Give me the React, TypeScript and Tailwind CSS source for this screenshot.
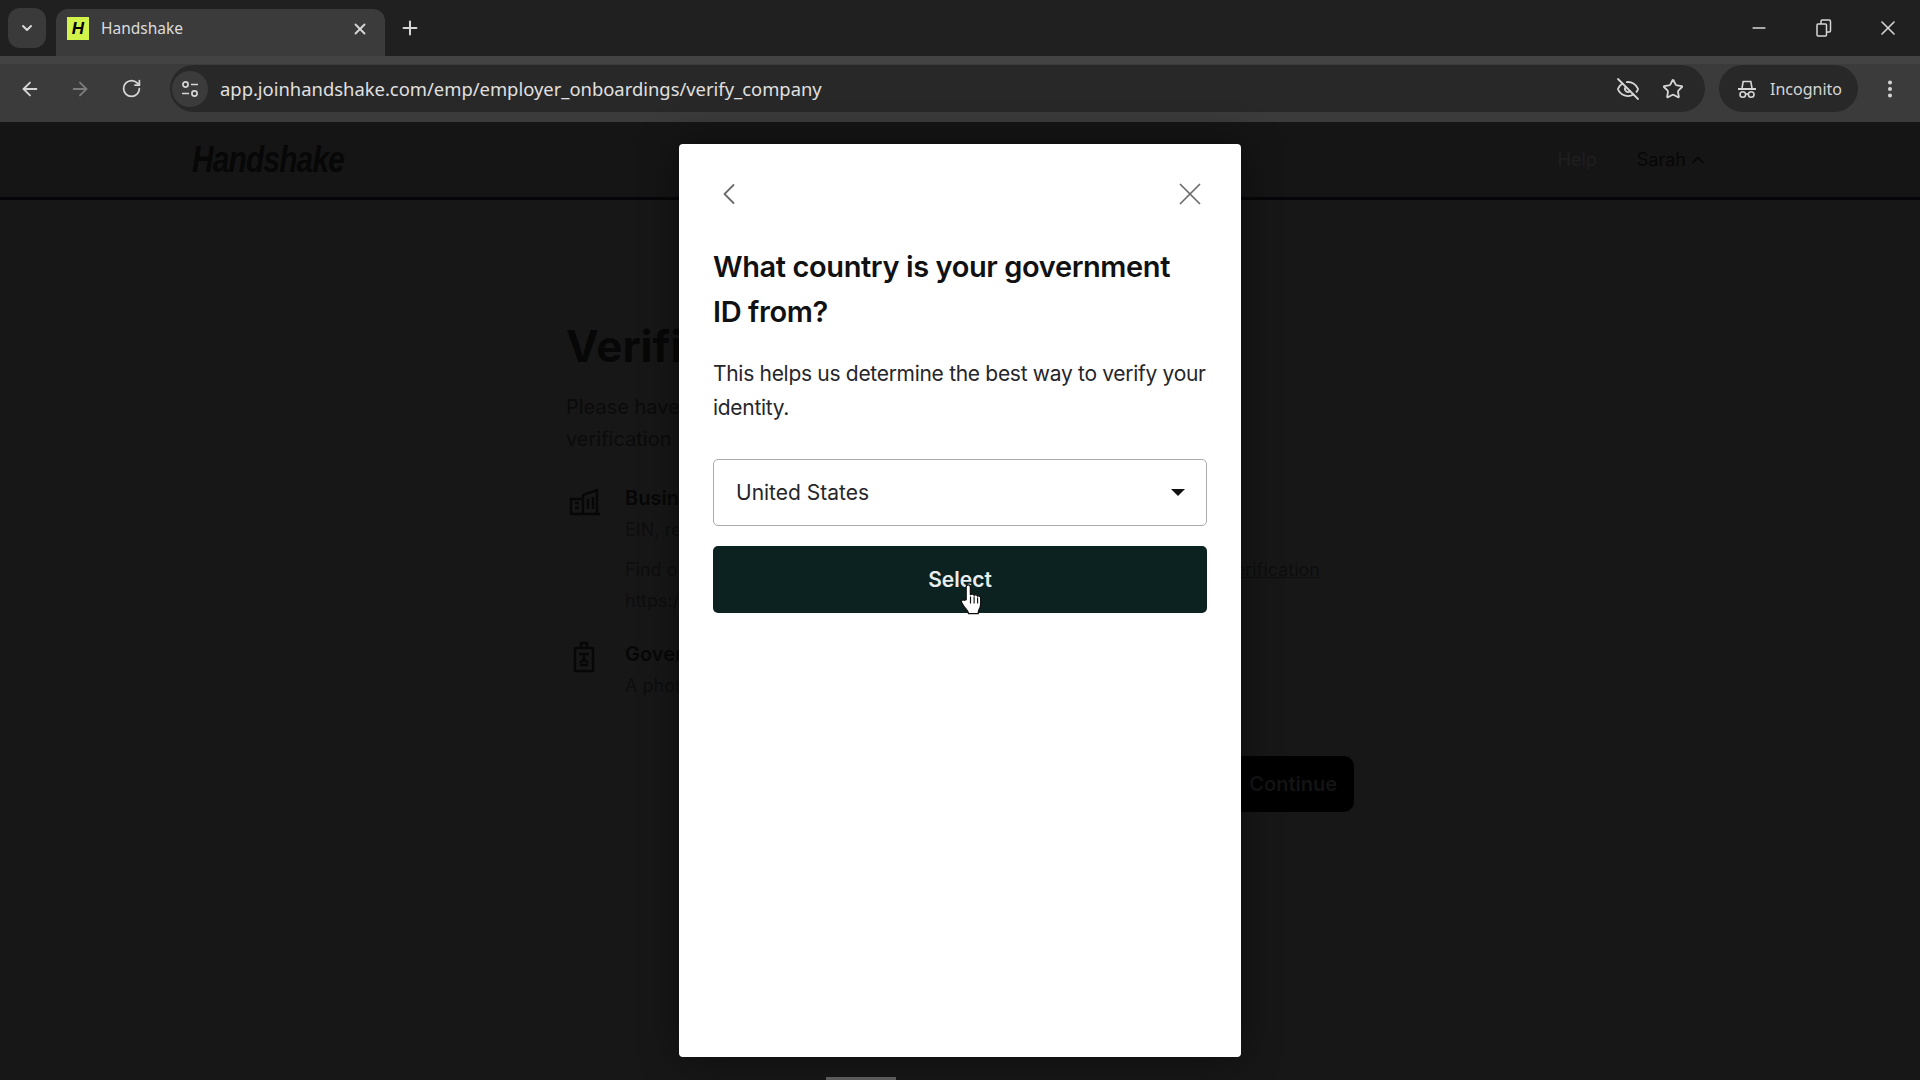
import { ArrowLeft, ArrowRight, ChevronDown, ChevronLeft, ChevronUp, EyeOff, Minus, MoreVertical, Plus, RotateCw, Star, X } from "lucide-react"

function RestoreIcon() {
  return (
    <svg width="16" height="18" viewBox="0 0 16 18" fill="none" stroke="#d6d6d6" strokeWidth="1.5">
      <rect x="1" y="5" width="9.5" height="12" rx="1" />
      <path d="M5 5V2.2C5 1.5 5.5 1 6.2 1h7c.7 0 1.3.5 1.3 1.2v9.6c0 .7-.6 1.2-1.3 1.2h-2.7" />
    </svg>
  )
}

function SiteSettingsIcon() {
  return (
    <svg width="18" height="18" viewBox="0 0 18 18" fill="none" stroke="#d6d6d6" strokeWidth="1.7">
      <circle cx="4.5" cy="4.500" r="2.600" />
      <path d="M10 4.500h7M1 13.500h7" />
      <circle cx="13.500" cy="13.500" r="2.600" />
    </svg>
  )
}

function IncognitoIcon() {
  return (
    <svg width="20" height="20" viewBox="0 0 20 20" fill="none" stroke="#d6d6d6" strokeWidth="1.6">
      <path d="M5 9l1.2-6.5h7.6L15 9" />
      <path d="M1 10h18" strokeWidth="2" />
      <circle cx="5.8" cy="15.5" r="2.8" />
      <circle cx="14.2" cy="15.5" r="2.8" />
      <path d="M8.6 15h2.8" />
    </svg>
  )
}

function BuildingIcon() {
  return (
    <svg width="32" height="28" viewBox="0 0 32 28" fill="none" stroke="#070708" strokeWidth="2.4">
      <path d="M2 26V11h12v15M14 26V7l14-5v24M1 26h30M6 15h4M6 20h4M19 11v10M24 9v12" />
    </svg>
  )
}

function BadgeIcon() {
  return (
    <svg width="24" height="32" viewBox="0 0 24 32" fill="none" stroke="#070708" strokeWidth="2.4">
      <rect x="3" y="7" width="18" height="23" rx="1" />
      <path d="M9 7V2h6v5M7 13h10M8 24h8M12 13v5M8 22l4-4 4 4" />
    </svg>
  )
}

function HandCursor() {
  return (
    <svg width="24" height="33" viewBox="0 0 24 34">
      <path
        d="M7 17V4.5C7 3 8 2 9.2 2s2.2 1 2.2 2.5V12c.8-1 3.4-.8 3.7.6.9-.9 3.3-.6 3.6 1 1-.6 3.3-.2 3.3 1.9v6.2c0 3-1 4.6-2 6.5-.4.8-.5 2.3-.5 3.3H9.500c-.2-1.700-1.200-3-2.500-4.500-1.700-1.900-3.600-4.800-4.700-6.900-.9-1.700.9-3.500 2.600-2.300z"
        fill="#ffffff"
        stroke="#111111"
        strokeWidth="1.4"
        strokeLinejoin="round"
      />
      <path d="M11.500 14v7M15.200 14v7M18.800 15v6" stroke="#111111" strokeWidth="1.200" />
    </svg>
  )
}

function BrowserChrome() {
  return (
    <div className="font-['Noto_Sans',sans-serif] text-[#d6d6d6]">
      {/* Tab strip */}
      <div className="flex h-[56px] items-end bg-[#202020] pl-[8px]">
        <div className="mb-[8px] flex h-[40px] w-[38px] items-center justify-center rounded-[12px] bg-[#3a3a3a]">
          <ChevronDown size={16} strokeWidth={3} />
        </div>
        <div className="ml-[10px] flex h-[47px] w-[329px] items-center rounded-t-[12px] bg-[#3b3b3b] pb-[8px] pl-[11px] pr-[16px]">
          <div className="flex h-[23px] w-[22px] items-center justify-center bg-[#d2f34a] font-['Liberation_Sans',sans-serif] text-[17px] font-bold italic text-black">
            H
          </div>
          <span className="ml-[12px] flex-1 text-[15.500px] text-[#dcdcdc]">Handshake</span>
          <X size={18} strokeWidth={2.5} />
        </div>
        <div className="mb-[16px] ml-[13px] flex h-[24px] w-[24px] items-center justify-center">
          <Plus size={22} strokeWidth={2.2} />
        </div>
        <div className="mb-[16px] ml-auto flex items-center">
          <Minus size={20} className="mr-[47px]" />
          <div className="mr-[44px]">
            <RestoreIcon />
          </div>
          <X size={24} strokeWidth={1.6} className="mr-[20px]" />
        </div>
      </div>
      {/* Toolbar */}
      <div className="flex h-[66px] items-center border-t-[8px] border-[#434343] bg-[#3b3b3b] pb-[9px]">
        <div className="flex w-[170px] items-center pl-[19px]">
          <ArrowLeft size={22} strokeWidth={2} />
          <ArrowRight size={22} strokeWidth={2} className="ml-[28px] text-[#7c7c7c]" />
          <RotateCw size={21} strokeWidth={2} className="ml-[30px]" />
        </div>
        <div className="flex h-[47px] w-[1535px] items-center rounded-full bg-[#282828] pl-[2px] pr-[20px]">
          <div className="flex h-[36px] w-[36px] items-center justify-center rounded-full bg-[#3b3b3b]">
            <SiteSettingsIcon />
          </div>
          <span className="ml-[12px] flex-1 text-[18.400px] text-[#e0e0e0]">
            app.joinhandshake.com/emp/employer_onboardings/verify_company
          </span>
          <EyeOff size={24} strokeWidth={1.8} className="mr-[2px]" />
          <Star size={22} strokeWidth={2} className="ml-[20px] mr-[1px]" />
        </div>
        <div className="ml-[14px] flex h-[47px] w-[139px] items-center rounded-full bg-[#282828] pl-[18px]">
          <IncognitoIcon />
          <span className="ml-[13px] text-[16px]">Incognito</span>
        </div>
        <MoreVertical size={22} strokeWidth={2.4} className="ml-[21px]" />
      </div>
    </div>
  )
}

// The page behind the dialog, darkened by the overlay
function BackgroundPage() {
  return (
    <div className="h-[958px] overflow-hidden bg-[#171717] font-['Inter',sans-serif] text-[#070708]">
      <div className="flex h-[78px] items-center border-b-[3px] border-[#060608] bg-[#151515] pl-[192px] pr-[210px]">
        <span className="origin-left scale-x-[0.83] font-['Liberation_Sans',sans-serif] text-[36px] font-bold italic tracking-[-1px]">
          Handshake
        </span>
        <span className="ml-auto text-[18px] text-[#1f1f1f]">Help</span>
        <span className="ml-[40px] mr-[2px] flex items-center text-[18px]">
          Sarah
          <ChevronUp size={20} className="ml-[2px]" />
        </span>
      </div>
      <div className="ml-[566px] w-[788px] pt-[120px]">
        <h1 className="text-[44px] font-bold leading-[52px]">Verification details</h1>
        <p className="mt-[19px] text-[20px] leading-[32px] text-[#0b0b0c]">
          Please have the following information ready to complete your company
          <br />
          verification
        </p>
        <div className="mt-[27px] flex">
          <div className="flex w-[59px] pl-[3px] pt-[6px]">
            <BuildingIcon />
          </div>
          <div className="flex-1">
            <div className="text-[20px] font-semibold leading-[32px]">Business information</div>
            <div className="text-[18px] leading-[32px] text-[#0e0e0f]">EIN, registered address</div>
            <div className="mt-[8px] text-[18px] leading-[32px] text-[#0e0e0f]">
              Find out more about what you need for{" "}
              <span className="float-right mr-[34px] underline">business verification</span>
            </div>
            <div className="text-[18px] leading-[30px] text-[#0e0e0f]">https://www.joinhandshake.com</div>
          </div>
        </div>
        <div className="mt-[22px] flex">
          <div className="flex w-[59px] pl-[6px] pt-[3px]">
            <BadgeIcon />
          </div>
          <div className="flex-1">
            <div className="text-[20px] font-semibold leading-[32px]">Government ID</div>
            <div className="text-[18px] leading-[32px] text-[#0e0e0f]">A photo of your ID</div>
          </div>
        </div>
        <div className="mt-[54px] flex justify-end">
          <div className="flex h-[56px] w-[200px] items-center justify-end rounded-[10px] bg-black pr-[17px] text-[20px] font-semibold text-[#141414]">
            Continue
          </div>
        </div>
      </div>
    </div>
  )
}

function CountryDialog() {
  return (
    <div className="absolute left-[679px] top-[144px] h-[913px] w-[562px] rounded-[4px] bg-white px-[34px] pt-[32px] font-['Inter',sans-serif] shadow-[0_0_40px_rgba(0,0,0,0.45)]">
      <div className="flex h-[36px] items-center justify-between text-[#6b6b6b]">
        <ChevronLeft size={36} strokeWidth={1.2} className="-ml-[2px]" />
        <X size={38} strokeWidth={1.1} className="-mr-[2px]" />
      </div>
      <h2 className="mt-[32px] w-[480px] text-[29px] font-semibold leading-[45px] tracking-[-0.4px] text-[#111111]">
        What country is your government ID from?
      </h2>
      <p className="mt-[23px] text-[21px] leading-[34px] tracking-[-0.3px] text-[#26262b]">
        This helps us determine the best way to verify your identity.
      </p>
      <div className="mt-[34px] flex h-[67px] items-center justify-between rounded-[5px] border-[1.5px] border-[#ababab] pl-[22px] pr-[21px] text-[21px] text-[#26262b]">
        United States
        <span className="h-0 w-0 border-x-[7px] border-t-[7px] border-x-transparent border-t-[#111111]" />
      </div>
      <div className="relative mt-[20px] flex h-[67px] items-center justify-center rounded-[5px] bg-[#0c2220] text-[21px] font-semibold text-[#e8eeee]">
        Select
        <div className="absolute left-[246px] top-[37px]">
          <HandCursor />
        </div>
      </div>
    </div>
  )
}

export default function App() {
  return (
    <div className="relative h-[1080px] w-[1920px] overflow-hidden bg-[#171717]">
      <BrowserChrome />
      <BackgroundPage />
      <CountryDialog />
      <div className="absolute bottom-0 left-[826px] h-[3px] w-[70px] bg-[#5a5a5a]" />
    </div>
  )
}
